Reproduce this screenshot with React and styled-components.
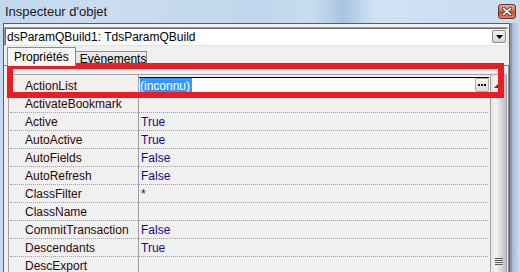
import React from 'react';
import styled, { createGlobalStyle } from 'styled-components';

const GlobalStyle = createGlobalStyle`
    html, body {
        margin: 0;
        padding: 0;
    }
    body {
        width: 520px;
        height: 272px;
        overflow: hidden;
        background: #c6d9ee;
        font-family: "Liberation Sans", Arial, sans-serif;
    }
`;

const properties = [
    { name: 'ActionList', value: '(inconnu)', selected: true },
    { name: 'ActivateBookmark', value: '' },
    { name: 'Active', value: 'True' },
    { name: 'AutoActive', value: 'True' },
    { name: 'AutoFields', value: 'False' },
    { name: 'AutoRefresh', value: 'False' },
    { name: 'ClassFilter', value: '*' },
    { name: 'ClassName', value: '' },
    { name: 'CommitTransaction', value: 'False' },
    { name: 'Descendants', value: 'True' },
    { name: 'DescExport', value: '' },
];

export default function App() {
    return (
        <Window>
            <GlobalStyle />
            <TitleBar>
                <Title>Inspecteur d'objet</Title>
                <CloseButton>
                    <svg width="10" height="9" viewBox="0 0 10 9">
                        <path
                            d="M1.5 1.5 L8.5 7.5 M8.5 1.5 L1.5 7.5"
                            stroke="#4a2018"
                            strokeWidth="3.2"
                            strokeLinecap="round"
                        />
                        <path
                            d="M1.5 1.5 L8.5 7.5 M8.5 1.5 L1.5 7.5"
                            stroke="#fff"
                            strokeWidth="1.8"
                            strokeLinecap="round"
                        />
                    </svg>
                </CloseButton>
            </TitleBar>
            <Body>
                <Client>
                    <Combo>
                        <ComboText>dsParamQBuild1: TdsParamQBuild</ComboText>
                        <DropButton>
                            <svg width="7" height="4" viewBox="0 0 7 4">
                                <path d="M0 0 H7 L3.5 4 Z" fill="#000" />
                            </svg>
                        </DropButton>
                    </Combo>
                    <TabBar>
                        <Tab active>Propriétés</Tab>
                        <Tab>Evènements</Tab>
                    </TabBar>
                    <Panel>
                        <Grid>
                            <Rows>
                                {properties.map((p) => (
                                    <Row key={p.name}>
                                        <NameCell>{p.name}</NameCell>
                                        {p.selected ? (
                                            <EditCell>
                                                <Selection>{p.value}</Selection>
                                                <EllipsisButton>
                                                    <svg width="8" height="2" viewBox="0 0 8 2">
                                                        <rect x="0" y="0" width="2" height="2" fill="#000" />
                                                        <rect x="3" y="0" width="2" height="2" fill="#000" />
                                                        <rect x="6" y="0" width="2" height="2" fill="#000" />
                                                    </svg>
                                                </EllipsisButton>
                                            </EditCell>
                                        ) : (
                                            <ValueCell>{p.value}</ValueCell>
                                        )}
                                    </Row>
                                ))}
                            </Rows>
                            <ScrollBar>
                                <UpArrow>
                                    <svg width="5" height="5" viewBox="0 0 5 5">
                                        <path d="M5 0 V5 H0 Z" fill="#3a3a3a" />
                                    </svg>
                                </UpArrow>
                                <Grip>
                                    <GripLine />
                                    <GripLine />
                                    <GripLine />
                                    <GripLine />
                                </Grip>
                            </ScrollBar>
                        </Grid>
                    </Panel>
                </Client>
                <RightFrame />
            </Body>
            <Highlight />
        </Window>
    );
}

const Window = styled.div`
    position: relative;
    width: 520px;
    height: 272px;
    display: flex;
    flex-direction: column;
    overflow: hidden;
`;

const TitleBar = styled.div`
    height: 23px;
    flex-shrink: 0;
    display: flex;
    align-items: center;
    padding-left: 5px;
    box-sizing: border-box;
    background: linear-gradient(
        to right,
        #c3d8ee 0%,
        #cadcf1 20%,
        #c1d6ec 50%,
        #c8dcf1 60%,
        #a9c4e0 66%,
        #d0e2f4 72%,
        #c9dcf1 100%
    );
`;

const Title = styled.div`
    font-size: 13px;
    color: #1a1a1a;
`;

const CloseButton = styled.div`
    margin-left: auto;
    margin-right: 4px;
    width: 18px;
    height: 15px;
    box-sizing: border-box;
    border: 1px solid #6a3326;
    border-radius: 3px;
    background: linear-gradient(#e6a893 0%, #d27358 45%, #c24a2d 55%, #d98668 100%);
    display: flex;
    align-items: center;
    justify-content: center;
`;

const Body = styled.div`
    flex: 1;
    display: flex;
    padding-left: 3px;
    min-height: 0;
`;

const Client = styled.div`
    width: 507px;
    box-sizing: border-box;
    border: 1px solid #5c5c5c;
    border-bottom: none;
    background: #f0f0f0;
    display: flex;
    flex-direction: column;
    min-height: 0;
`;

const RightFrame = styled.div`
    flex: 1;
    border-left: 2px solid #8f9aa6;
    background: linear-gradient(to right, #9fb9d6, #cfe0f2);
`;

const Combo = styled.div`
    margin: 3px 1px 0 0;
    height: 19px;
    box-sizing: border-box;
    border: 1px solid;
    border-color: #a0a0a0 #e3e3e3 #e3e3e3 #a0a0a0;
    box-shadow: inset 1px 1px 0 #696969;
    background: #fff;
    display: flex;
    align-items: center;
    padding: 0 1px 0 2px;
`;

const ComboText = styled.div`
    font-size: 12px;
    color: #000;
`;

const DropButton = styled.div`
    margin-left: auto;
    width: 14px;
    height: 13px;
    box-sizing: border-box;
    border: 1px solid #8a8a8a;
    border-radius: 2px;
    background: linear-gradient(#f4f4f4, #d6d6d6);
    display: flex;
    align-items: center;
    justify-content: center;
`;

const TabBar = styled.div`
    height: 19px;
    display: flex;
    align-items: flex-end;
    padding-left: 3px;
    flex-shrink: 0;
`;

const Tab = styled.div`
    box-sizing: border-box;
    height: ${(p) => (p.active ? '19px' : '14px')};
    margin-bottom: ${(p) => (p.active ? '-1px' : '0')};
    padding: ${(p) => (p.active ? '1px 6px 0' : '0 0 0 4px')};
    border: 1px solid #898c95;
    border-bottom: ${(p) => (p.active ? 'none' : '1px solid #898c95')};
    margin-left: ${(p) => (p.active ? '0' : '-1px')};
    background: ${(p) => (p.active ? '#f7f7f7' : 'linear-gradient(#ededed, #dcdcdc)')};
    font-size: 12px;
    line-height: ${(p) => (p.active ? '16px' : '14px')};
    color: #000;
    position: relative;
    z-index: ${(p) => (p.active ? 1 : 0)};
`;

const Panel = styled.div`
    flex: 1;
    min-height: 0;
    border-top: 1px solid #898c95;
    border-right: 1px solid #898c95;
    padding: 8px 1px 0 4px;
    display: flex;
`;

const Grid = styled.div`
    flex: 1;
    display: flex;
    border: 1px solid #a0a0a0;
    border-bottom: none;
    min-height: 0;
`;

const Rows = styled.div`
    flex: 1;
    padding: 2px 2px 0 1px;
    background-image: linear-gradient(#a0a0a0, #a0a0a0);
    background-size: 1px 100%;
    background-position: 129px 0;
    background-repeat: no-repeat;
    overflow: hidden;
`;

const Row = styled.div`
    display: flex;
    height: 18px;
    box-sizing: border-box;
    border-bottom: 1px dotted #a0a0a0;
    font-size: 12px;
    line-height: 19px;
`;

const NameCell = styled.div`
    width: 128px;
    flex-shrink: 0;
    padding-left: 15px;
    box-sizing: border-box;
    color: #2e0808;
    white-space: nowrap;
`;

const ValueCell = styled.div`
    flex: 1;
    padding-left: 3px;
    color: #1c0a80;
`;

const EditCell = styled.div`
    flex: 1;
    margin-left: 1px;
    margin-right: -1px;
    background: #fff;
    border-top: 1px solid #000;
    display: flex;
    align-items: flex-start;
    padding-left: 1px;
    line-height: 16px;
`;

const Selection = styled.span`
    background: #3399ff;
    color: #fff;
    padding: 0 2px 0 0;
`;

const EllipsisButton = styled.div`
    margin-left: auto;
    width: 14px;
    height: 14px;
    box-sizing: border-box;
    border: 1px solid #acacac;
    border-radius: 2px;
    background: linear-gradient(#f6f6f6, #dadada);
    display: flex;
    align-items: center;
    justify-content: center;
`;

const ScrollBar = styled.div`
    width: 16px;
    box-sizing: border-box;
    border-left: 1px solid #a0a0a0;
    background: linear-gradient(
        to right,
        #e4e4e4 0%,
        #f3f3f3 35%,
        #d9d9d9 65%,
        #c2c2c2 95%,
        #b5b5b5 100%
    );
    display: flex;
    flex-direction: column;
    align-items: center;
`;

const UpArrow = styled.div`
    margin-top: 8px;
    margin-right: 4px;
    line-height: 0;
`;

const Grip = styled.div`
    margin-top: auto;
    margin-bottom: 7px;
    display: flex;
    flex-direction: column;
    gap: 1px;
`;

const GripLine = styled.div`
    width: 8px;
    height: 1px;
    background: #5a5a5a;
    box-shadow: 0 1px 0 #e8e8e8;
`;

const Highlight = styled.div`
    position: absolute;
    left: 7px;
    top: 63px;
    width: 497px;
    height: 35px;
    box-sizing: border-box;
    border: 6px solid #ec1c24;
    pointer-events: none;
`;
